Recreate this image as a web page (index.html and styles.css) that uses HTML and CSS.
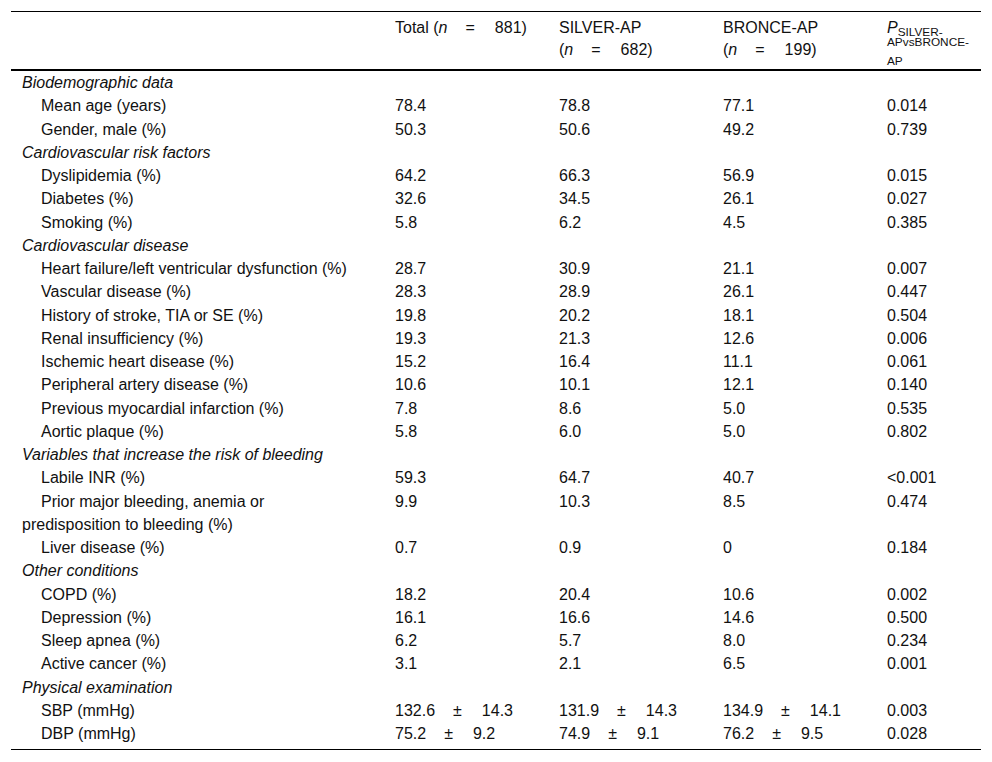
FILE: index.html
```html
<!DOCTYPE html>
<html>
<head>
<meta charset="utf-8">
<link rel="stylesheet" href="styles.css">
</head>
<body>
<table class="tbl">
  <colgroup>
    <col class="c1"><col class="c2"><col class="c2"><col class="c2"><col class="c5">
  </colgroup>
  <thead>
    <tr>
      <th></th>
      <th>Total <span class="nw">(<i>n</i><span class="op">=</span>881)</span></th>
      <th>SILVER-AP <span class="nw">(<i>n</i><span class="op">=</span>682)</span></th>
      <th>BRONCE-AP <span class="nw">(<i>n</i><span class="op">=</span>199)</span></th>
      <th class="pth">
        <div class="pl1"><i class="pp">P</i><span class="ps">SILVER-</span></div>
        <div class="pl2">AP<span>vs</span>BRONCE-</div>
        <div class="pl3">AP</div>
      </th>
    </tr>
  </thead>
  <tbody>
    <tr class="grp"><td colspan="5">Biodemographic data</td></tr>
    <tr><td class="lbl">Mean age (years)</td><td>78.4</td><td>78.8</td><td>77.1</td><td>0.014</td></tr>
    <tr><td class="lbl">Gender, male (%)</td><td>50.3</td><td>50.6</td><td>49.2</td><td>0.739</td></tr>
    <tr class="grp"><td colspan="5">Cardiovascular risk factors</td></tr>
    <tr><td class="lbl">Dyslipidemia (%)</td><td>64.2</td><td>66.3</td><td>56.9</td><td>0.015</td></tr>
    <tr><td class="lbl">Diabetes (%)</td><td>32.6</td><td>34.5</td><td>26.1</td><td>0.027</td></tr>
    <tr><td class="lbl">Smoking (%)</td><td>5.8</td><td>6.2</td><td>4.5</td><td>0.385</td></tr>
    <tr class="grp"><td colspan="5">Cardiovascular disease</td></tr>
    <tr><td class="lbl">Heart failure/left ventricular dysfunction (%)</td><td>28.7</td><td>30.9</td><td>21.1</td><td>0.007</td></tr>
    <tr><td class="lbl">Vascular disease (%)</td><td>28.3</td><td>28.9</td><td>26.1</td><td>0.447</td></tr>
    <tr><td class="lbl">History of stroke, TIA or SE (%)</td><td>19.8</td><td>20.2</td><td>18.1</td><td>0.504</td></tr>
    <tr><td class="lbl">Renal insufficiency (%)</td><td>19.3</td><td>21.3</td><td>12.6</td><td>0.006</td></tr>
    <tr><td class="lbl">Ischemic heart disease (%)</td><td>15.2</td><td>16.4</td><td>11.1</td><td>0.061</td></tr>
    <tr><td class="lbl">Peripheral artery disease (%)</td><td>10.6</td><td>10.1</td><td>12.1</td><td>0.140</td></tr>
    <tr><td class="lbl">Previous myocardial infarction (%)</td><td>7.8</td><td>8.6</td><td>5.0</td><td>0.535</td></tr>
    <tr><td class="lbl">Aortic plaque (%)</td><td>5.8</td><td>6.0</td><td>5.0</td><td>0.802</td></tr>
    <tr class="grp"><td colspan="5">Variables that increase the risk of bleeding</td></tr>
    <tr><td class="lbl">Labile INR (%)</td><td>59.3</td><td>64.7</td><td>40.7</td><td>&lt;0.001</td></tr>
    <tr><td class="lbl">Prior major bleeding, anemia or predisposition to bleeding (%)</td><td>9.9</td><td>10.3</td><td>8.5</td><td>0.474</td></tr>
    <tr><td class="lbl">Liver disease (%)</td><td>0.7</td><td>0.9</td><td>0</td><td>0.184</td></tr>
    <tr class="grp"><td colspan="5">Other conditions</td></tr>
    <tr><td class="lbl">COPD (%)</td><td>18.2</td><td>20.4</td><td>10.6</td><td>0.002</td></tr>
    <tr><td class="lbl">Depression (%)</td><td>16.1</td><td>16.6</td><td>14.6</td><td>0.500</td></tr>
    <tr><td class="lbl">Sleep apnea (%)</td><td>6.2</td><td>5.7</td><td>8.0</td><td>0.234</td></tr>
    <tr><td class="lbl">Active cancer (%)</td><td>3.1</td><td>2.1</td><td>6.5</td><td>0.001</td></tr>
    <tr class="grp"><td colspan="5">Physical examination</td></tr>
    <tr><td class="lbl">SBP (mmHg)</td><td>132.6<span class="op">±</span>14.3</td><td>131.9<span class="op">±</span>14.3</td><td>134.9<span class="op">±</span>14.1</td><td>0.003</td></tr>
    <tr class="last"><td class="lbl">DBP (mmHg)</td><td>75.2<span class="op">±</span>9.2</td><td>74.9<span class="op">±</span>9.1</td><td>76.2<span class="op">±</span>9.5</td><td>0.028</td></tr>
  </tbody>
</table>
</body>
</html>
```

FILE: styles.css
```css
html, body {
  margin: 0;
  padding: 0;
  background: #fff;
}
body {
  padding: 11px 0 0 11px;
  font-family: "Liberation Sans", Arial, sans-serif;
  font-size: 16px;
  color: #111;
}
.tbl {
  width: 970px;
  border-collapse: collapse;
  table-layout: fixed;
  border-top: 1px solid #000;
  border-bottom: 1px solid #000;
}
.c1 { width: 373px; }
.c2 { width: 164px; }
.c5 { width: 105px; }
.tbl thead th {
  font-weight: normal;
  text-align: left;
  vertical-align: top;
  padding: 5px 0 0 11px;
  line-height: 22px;
  height: 50px;
  border-bottom: 2px solid #000;
}
.nw { white-space: nowrap; }
.op { margin: 0 20px 0 18px; }
.pth { padding-right: 0; }
.pl1 {
  line-height: 16px;
  margin-top: 3px;
  white-space: nowrap;
}
.pp { font-size: 16px; }
.ps {
  font-size: 11.8px;
  vertical-align: -3px;
}
.pl2 {
  font-size: 11.8px;
  line-height: 6px;
  margin-top: -1px;
  white-space: nowrap;
}
.pl3 {
  font-size: 11.8px;
  line-height: 16px;
  margin-top: 8px;
}
.tbl tbody td {
  padding: 0 0 0 11px;
  line-height: 23.25px;
  vertical-align: top;
}
.tbl tbody .grp td { font-style: italic; }
.tbl tbody td.lbl { text-indent: 19px; padding-right: 20px; }
.tbl tbody tr.last td { padding-bottom: 4px; }
```
